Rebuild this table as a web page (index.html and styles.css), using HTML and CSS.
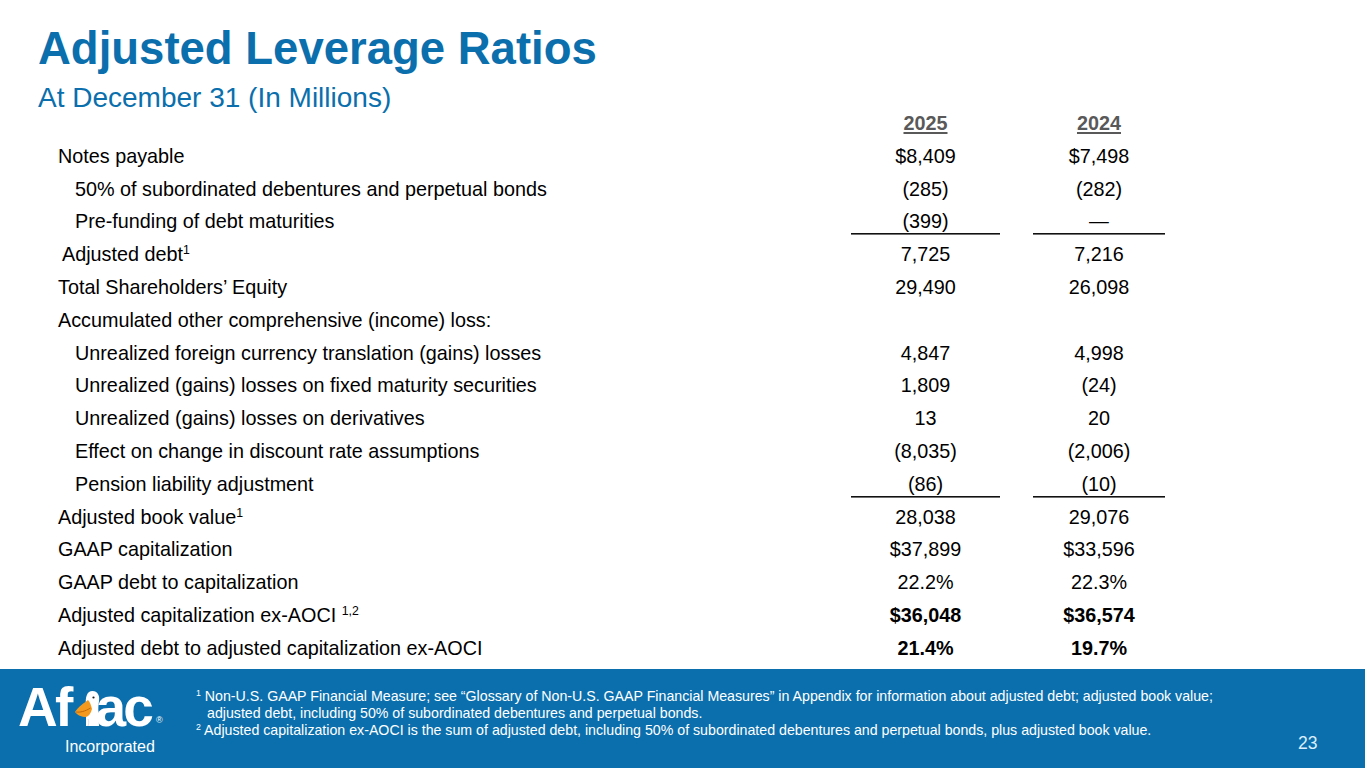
FILE: index.html
```html
<!DOCTYPE html>
<html lang="en">
<head>
<meta charset="utf-8">
<title>Adjusted Leverage Ratios</title>
<link rel="stylesheet" href="styles.css">
</head>
<body>
<div class="slide">
  <header class="head">
    <h1 class="title">Adjusted Leverage Ratios</h1>
    <p class="subtitle">At December 31 (In Millions)</p>
  </header>

  <main class="table">
    <div class="row hdr"><span class="lbl"></span><span class="val yr">2025</span><span class="val yr">2024</span></div>
    <div class="row"><span class="lbl">Notes payable</span><span class="val">$8,409</span><span class="val">$7,498</span></div>
    <div class="row"><span class="lbl ind">50% of subordinated debentures and perpetual bonds</span><span class="val">(285)</span><span class="val">(282)</span></div>
    <div class="row"><span class="lbl ind">Pre-funding of debt maturities</span><span class="val rule r399">(399)</span><span class="val rule r399">—</span></div>
    <div class="row"><span class="lbl sub">Adjusted debt<sup>1</sup></span><span class="val">7,725</span><span class="val">7,216</span></div>
    <div class="row"><span class="lbl">Total Shareholders’ Equity</span><span class="val">29,490</span><span class="val">26,098</span></div>
    <div class="row"><span class="lbl">Accumulated other comprehensive (income) loss:</span><span class="val"></span><span class="val"></span></div>
    <div class="row"><span class="lbl ind">Unrealized foreign currency translation (gains) losses</span><span class="val">4,847</span><span class="val">4,998</span></div>
    <div class="row"><span class="lbl ind">Unrealized (gains) losses on fixed maturity securities</span><span class="val">1,809</span><span class="val">(24)</span></div>
    <div class="row"><span class="lbl ind">Unrealized (gains) losses on derivatives</span><span class="val">13</span><span class="val">20</span></div>
    <div class="row"><span class="lbl ind">Effect on change in discount rate assumptions</span><span class="val">(8,035)</span><span class="val">(2,006)</span></div>
    <div class="row"><span class="lbl ind">Pension liability adjustment</span><span class="val rule">(86)</span><span class="val rule">(10)</span></div>
    <div class="row"><span class="lbl">Adjusted book value<sup>1</sup></span><span class="val">28,038</span><span class="val">29,076</span></div>
    <div class="row"><span class="lbl">GAAP capitalization</span><span class="val">$37,899</span><span class="val">$33,596</span></div>
    <div class="row"><span class="lbl">GAAP debt to capitalization</span><span class="val">22.2%</span><span class="val">22.3%</span></div>
    <div class="row"><span class="lbl">Adjusted capitalization ex-AOCI <sup>1,2</sup></span><span class="val b">$36,048</span><span class="val b">$36,574</span></div>
    <div class="row"><span class="lbl">Adjusted debt to adjusted capitalization ex-AOCI</span><span class="val b">21.4%</span><span class="val b">19.7%</span></div>
  </main>

  <footer class="foot">
    <div class="logo">
      <div class="wordmark">
        <span class="wm-text">Af</span>
        <svg class="duck" viewBox="0 0 26 36" width="26" height="36" aria-hidden="true">
          <path d="M12 36 L12 16 C11 7 13 1 18.5 1 C23.5 1 26 5.5 25 11 C24.5 15 24 18 24.5 22 L25 36 Z" fill="#ffffff"/>
          <path d="M14 10 C10 13 4 17 1 22 C3 25 8 27 12 27 C15 26 17 23 18 19 C17 15 16 12 14 10 Z" fill="#f39a1e"/>
          <path d="M2 22 C6 22.5 11 21.5 16.5 18" stroke="#b86208" stroke-width="0.9" fill="none"/>
          <circle cx="19.5" cy="7.5" r="1.1" fill="#1a1a1a"/>
          <path d="M14 29 C15 31 15 33 14 36" stroke="#d5dbe3" stroke-width="0.8" fill="none"/>
        </svg>
        <span class="wm-text">ac</span>
        <span class="reg">®</span>
      </div>
      <div class="inc">Incorporated</div>
    </div>
    <div class="notes">
      <p class="note"><sup>1</sup> Non-U.S. GAAP Financial Measure; see “Glossary of Non-U.S. GAAP Financial Measures” in Appendix for information about adjusted debt; adjusted book value;</p>
      <p class="note cont">adjusted debt, including 50% of subordinated debentures and perpetual bonds.</p>
      <p class="note"><sup>2</sup> Adjusted capitalization ex-AOCI is the sum of adjusted debt, including 50% of subordinated debentures and perpetual bonds, plus adjusted book value.</p>
    </div>
    <div class="page">23</div>
  </footer>
</div>
</body>
</html>
```

FILE: styles.css
```css
html, body {
  margin: 0;
  padding: 0;
  background: #ffffff;
}

.slide {
  width: 1365px;
  height: 768px;
  overflow: hidden;
  display: flex;
  flex-direction: column;
  font-family: "Liberation Sans", Arial, sans-serif;
  color: #000000;
}

.head {
  padding-left: 38px;
}

.title {
  margin: 26px 0 0 0;
  font-size: 45.5px;
  line-height: 45px;
  font-weight: 700;
  color: #0a6fac;
  letter-spacing: 0;
}

.subtitle {
  margin: 17px 0 0 0;
  font-size: 28px;
  line-height: 20px;
  font-weight: 400;
  color: #0a6fac;
}

.table {
  flex: 1;
  padding-left: 58px;
  width: 1107px;
  display: grid;
  grid-template-columns: 1fr;
  align-content: start;
  margin-top: -1px;
}

.row {
  display: grid;
  grid-template-columns: 1fr 149px 132px;
  column-gap: 33px;
  height: 32.8px;
  font-size: 19.8px;
  line-height: 32.8px;
}

.lbl {
  white-space: nowrap;
}

.lbl.ind {
  padding-left: 17px;
}

.lbl.sub {
  padding-left: 4px;
}

.lbl sup,
.note sup {
  font-size: 0.62em;
  line-height: 0;
  vertical-align: 0.55em;
}

.val {
  text-align: center;
}

.val.b {
  font-weight: 700;
}

.yr {
  font-weight: 700;
  color: #595959;
  text-decoration: underline;
  text-underline-offset: 2px;
  text-decoration-thickness: 1.5px;
}

.rule {
  background-image: linear-gradient(#111111, #111111);
  background-repeat: no-repeat;
  background-size: 100% 1.6px;
  background-position: 0 calc(100% - 3px);
}

.rule.r399 {
  background-position: 0 calc(100% - 4px);
}

.foot {
  height: 99px;
  background: #0b6fad;
  display: flex;
  color: #ffffff;
}

.logo {
  width: 178px;
  flex: none;
  padding-left: 18px;
  padding-top: 15px;
  box-sizing: border-box;
}

.wordmark {
  display: flex;
  align-items: flex-end;
  height: 46px;
}

.wm-text {
  font-size: 55px;
  line-height: 46px;
  font-weight: 700;
  letter-spacing: -2.8px;
  color: #ffffff;
}

.duck {
  display: block;
  flex: none;
  margin: 0 -5px 4px 4px;
}

.reg {
  font-size: 9px;
  line-height: 12px;
  margin-left: 5px;
  margin-bottom: 4px;
}

.inc {
  font-size: 16px;
  line-height: 18px;
  margin: 8px 0 0 47px;
  color: #ffffff;
}

.notes {
  flex: 1;
  padding-top: 18.5px;
  padding-left: 18px;
}

.note {
  margin: 0;
  font-size: 14.2px;
  line-height: 17px;
  white-space: nowrap;
}

.note.cont {
  padding-left: 11px;
}

.page {
  flex: none;
  align-self: flex-end;
  width: 67px;
  padding-bottom: 16px;
  font-size: 17.5px;
  line-height: 18px;
  color: #dcefff;
}
```
